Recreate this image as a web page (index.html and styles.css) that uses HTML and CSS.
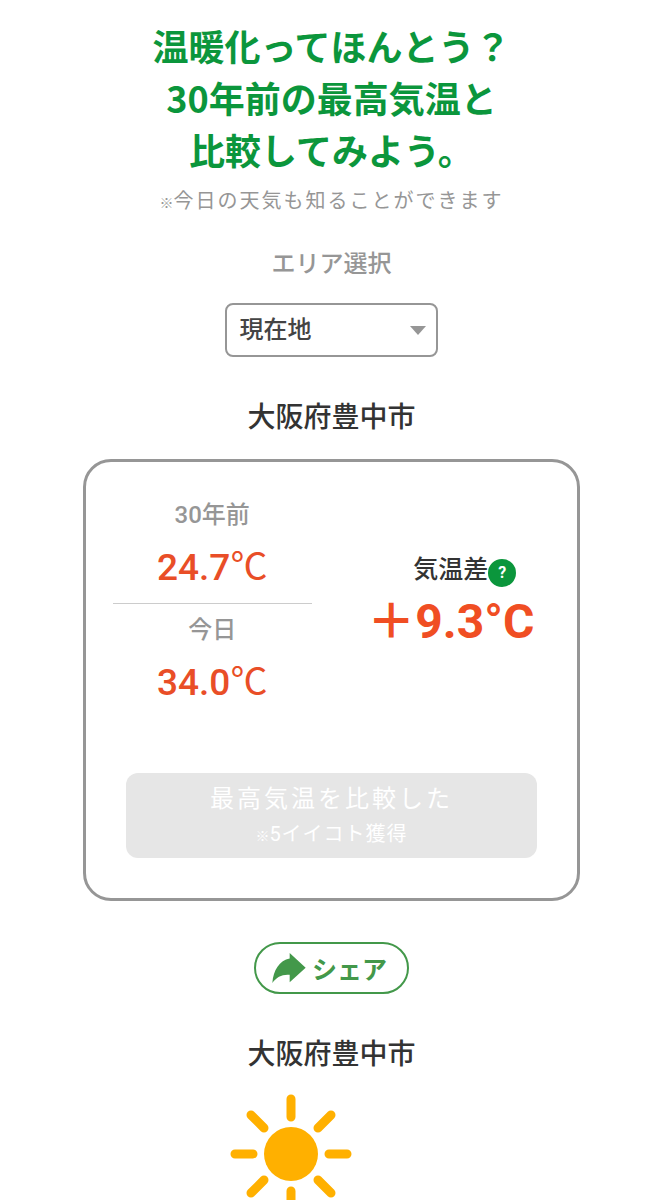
FILE: index.html
```
<!DOCTYPE html>
<html lang="ja">
	<head>
		<meta charset="utf-8" />
		<meta name="viewport" content="width=device-width, initial-scale=1" />
		<title>30年前の最高気温と比較</title>
		<link rel="stylesheet" href="styles.css">
	</head>
	<body>
		<div class="page">
			<h1 class="title">温暖化ってほんとう？<br>30年前の最高気温と<br>比較してみよう。</h1>
			<p class="note"><span class="mark">※</span>今日の天気も知ることができます</p>

			<label class="area-label" for="area">エリア選択</label>
			<div class="area">
				<select id="area">
					<option>現在地</option>
				</select>
				<svg class="caret" width="16" height="9" viewBox="0 0 16 9" aria-hidden="true"><path d="M0 0H16L8 9Z" fill="#969696"/></svg>
			</div>

			<h2 class="city">大阪府豊中市</h2>

			<div class="card">
				<div class="compare">
					<div class="temps">
						<div class="temp">
							<p class="temp-label">30年前</p>
							<p class="temp-value">24.7<span class="unit">℃</span></p>
						</div>
						<div class="temp">
							<p class="temp-label">今日</p>
							<p class="temp-value">34.0<span class="unit">℃</span></p>
						</div>
					</div>
					<div class="diff">
						<p class="diff-label">気温差<button type="button" class="help">?</button></p>
						<p class="diff-value">＋9.3°C</p>
					</div>
				</div>
				<button type="button" class="done" disabled>
					<span class="done-main">最高気温を比較した</span>
					<span class="done-sub"><span class="mark">※</span>5イイコト獲得</span>
				</button>
			</div>

			<button type="button" class="share">
				<svg width="34" height="30" viewBox="0 0 100 88" aria-hidden="true"><path d="M52 0L99 43L52 86V64C30 62 14 70 1 88C4 50 22 22 52 16Z" fill="#43984a"/></svg>
				シェア
			</button>

			<h2 class="city">大阪府豊中市</h2>

			<div class="weather">
				<svg width="122" height="122" viewBox="0 0 122 122" role="img" aria-label="晴れ">
					<circle cx="61" cy="61" r="27" fill="#ffb000"/>
					<g stroke="#ffb000" stroke-width="9" stroke-linecap="round">
						<path d="M61 6V24M61 98V116M5 61H23M99 61H117"/>
						<path d="M21 22L34 35M101 22L88 35M21 100L34 87M101 100L88 87"/>
					</g>
				</svg>
			</div>
		</div>
	</body>
</html>
```
FILE: styles.css
```
*{
	margin: 0;
	padding: 0;
	box-sizing: border-box;
}
body{
	background: #fff;
	color: #333;
	font-family: Roboto, "Noto Sans CJK JP", sans-serif;
}
button, select{
	font-family: inherit;
}
.page{
	display: flex;
	flex-direction: column;
	align-items: center;
	padding-top: 19px;
	text-align: center;
}
.title{
	color: #0b963c;
	font-family: "Noto Sans CJK JP", sans-serif;
	font-size: 36px;
	font-weight: bold;
	line-height: 52px;
}
.note{
	margin-top: 10px;
	color: #969696;
	font-size: 20px;
	line-height: 32px;
	letter-spacing: 2px;
}
.mark{
	font-size: 14px;
	font-weight: bold;
	line-height: 1;
	letter-spacing: 0;
}

/* area */
.area-label{
	margin-top: 31px;
	color: #969696;
	font-size: 24px;
	font-weight: 500;
	line-height: 32px;
}
.area{
	position: relative;
	width: 32%;
	margin-top: 23px;
}
.area select{
	width: 100%;
	height: 54px;
	padding: 0 12px;
	border: 2px solid #969696;
	border-radius: 8px;
	background: #fff;
	color: #444;
	font-size: 24px;
	font-weight: 500;
	appearance: none;
}
.caret{
	position: absolute;
	right: 12px;
	top: 23px;
	pointer-events: none;
}
.city{
	margin-top: 41px;
	font-size: 28px;
	font-weight: 500;
	line-height: 40px;
}

/* card */
.card{
	width: 75%;
	margin-top: 21px;
	padding: 27px 27px 40px;
	border: 3px solid #969696;
	border-radius: 28px;
}
.compare{
	display: grid;
	grid-template-columns: 1fr 1fr;
	column-gap: 40px;
	align-items: center;
}
.temp{
	padding: 6px 0 8px;
}
.temp + .temp{
	border-top: 1px solid #ccc;
}
.temp-label{
	color: #969696;
	font-size: 24px;
	font-weight: 500;
	line-height: 40px;
}
.temp-value{
	margin-top: 6px;
	color: #e94e27;
	font-size: 37px;
	font-weight: 500;
	line-height: 54px;
}
.unit{
	font-family: "Noto Sans CJK JP", sans-serif;
	font-weight: 400;
	line-height: 1;
}
.diff{
	display: flex;
	flex-direction: column;
	align-items: center;
	padding-bottom: 4px;
}
.diff-label{
	position: relative;
	font-size: 25px;
	font-weight: 500;
	line-height: 40px;
}
.help{
	position: absolute;
	left: 100%;
	top: 9px;
	width: 28px;
	height: 28px;
	border: none;
	border-radius: 50%;
	background: #0b963c;
	color: #fff;
	font-size: 16px;
	font-weight: bold;
}
.diff-value{
	color: #f04e23;
	font-size: 48px;
	font-weight: bold;
	line-height: 64px;
	white-space: nowrap;
}
.done{
	display: block;
	width: 94%;
	margin: 55px auto 0;
	padding: 9px 0 6px;
	border: none;
	border-radius: 12px;
	background: #e6e6e6;
	color: #fff;
}
.done-main, .done-sub{
	display: block;
	line-height: 35px;
}
.done-main{
	font-size: 24px;
	letter-spacing: 3px;
}
.done-sub{
	font-size: 20px;
	letter-spacing: 1px;
}

/* share */
.share{
	display: flex;
	align-items: center;
	gap: 6px;
	height: 52px;
	margin-top: 41px;
	padding: 0 20px 0 16px;
	border: 2px solid #43984a;
	border-radius: 26px;
	background: #fff;
	color: #43984a;
	font-size: 25px;
	font-weight: bold;
}
.weather{
	margin-top: 18px;
	padding-right: 82px;
}
```
